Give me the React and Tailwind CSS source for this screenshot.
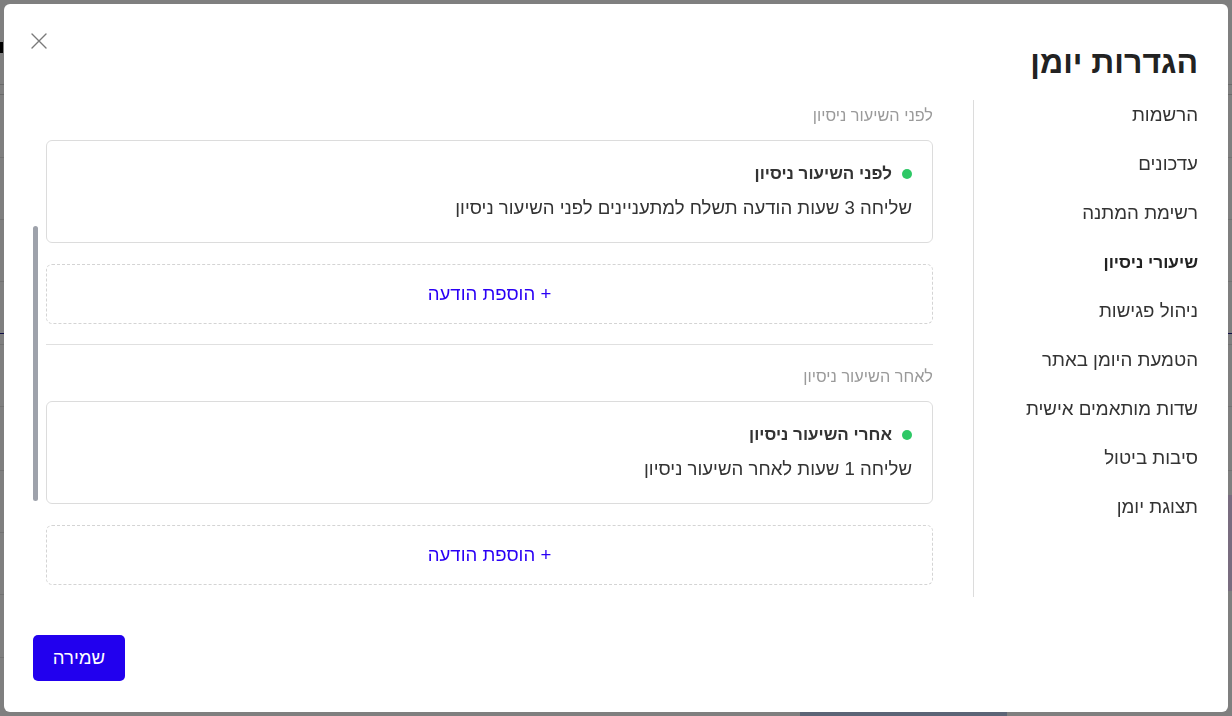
import React from "react";

const navItems = [
  { label: "הרשמות" },
  { label: "עדכונים" },
  { label: "רשימת המתנה" },
  { label: "שיעורי ניסיון", active: true },
  { label: "ניהול פגישות" },
  { label: "הטמעת היומן באתר" },
  { label: "שדות מותאמים אישית" },
  { label: "סיבות ביטול" },
  { label: "תצוגת יומן" },
];

const sections = [
  {
    heading: "לפני השיעור ניסיון",
    title: "לפני השיעור ניסיון",
    body: "שליחה 3 שעות הודעה תשלח למתעניינים לפני השיעור ניסיון",
  },
  {
    heading: "לאחר השיעור ניסיון",
    title: "אחרי השיעור ניסיון",
    body: "שליחה 1 שעות לאחר השיעור ניסיון",
  },
];

// The calendar page that sits beneath the settings dialog
function BackgroundPage() {
  return (
    <div className="h-screen w-full bg-white flex flex-col overflow-hidden">
      <div className="h-[85px] shrink-0 border-b border-[#d4d4d4] flex items-start pt-[42px]">
        <span className="w-[3px] h-[11px] bg-black" />
      </div>
      <div className="h-[10px] shrink-0 border-b border-[#d4d4d4]" />
      <div className="h-[63px] shrink-0 border-b border-[#e4e4e4]" />
      <div className="h-[62px] shrink-0 border-b border-[#e4e4e4]" />
      <div className="h-[62px] shrink-0 border-b border-[#e4e4e4]" />
      <div className="h-[52px] shrink-0 border-b border-[#1e1b8a]" />
      <div className="h-[11px] shrink-0 border-b border-[#e4e4e4]" />
      <div className="h-[62px] shrink-0 border-b border-[#e4e4e4]" />
      <div className="h-[64px] shrink-0 border-b border-[#e4e4e4]" />
      <div className="h-[187px] shrink-0 flex">
        <div className="flex-1 flex flex-col">
          <div className="h-[62px] border-b border-[#e4e4e4]" />
          <div className="h-[62px] border-b border-[#e4e4e4]" />
          <div className="h-[63px] border-b border-[#e4e4e4]" />
        </div>
        <div className="w-[16px] flex flex-col">
          <div className="h-[24px]" />
          <div className="h-[96px] bg-[#f0d8ff]" />
        </div>
      </div>
      <div className="flex-1 flex">
        <div className="w-[800px]" />
        <div className="w-[207px] bg-[#b8c8ec] mt-auto h-[6px]" />
      </div>
    </div>
  );
}

function CloseIcon() {
  return (
    <svg width="16" height="16" viewBox="0 0 16 16" fill="none">
      <path d="M1 1 15 15M15 1 1 15" stroke="#7a7a7a" strokeWidth="1.4" strokeLinecap="round" />
    </svg>
  );
}

function MessageSection({ heading, title, body }) {
  return (
    <div>
      <div className="text-[16.3px] leading-6 text-[#9a9a9a]">{heading}</div>
      <div className="mt-[13px] border border-[#dcdcdc] rounded-[6px] px-5 pt-[19px] pb-[20px]">
        <div className="flex items-center gap-2.5">
          <span className="w-2.5 h-2.5 rounded-full bg-[#2ec866] shrink-0" />
          <span className="text-[17px] leading-7 font-bold text-[#333]">{title}</span>
        </div>
        <div className="mt-[6px] text-[18.6px] leading-7 text-[#333]">{body}</div>
      </div>
      <button className="mt-[21px] w-full h-[60px] border border-dashed border-[#d4d4d4] rounded-[6px] flex items-center justify-center text-[18.6px] text-[#2a00f5]">
        + הוספת הודעה
      </button>
    </div>
  );
}

export default function App() {
  return (
    <div className="font-['Liberation_Sans',Arial,sans-serif]">
      <BackgroundPage />
      <div className="fixed inset-0 bg-black/50" />
      <div dir="rtl" className="fixed inset-1 bg-white rounded-[6px] flex flex-col">
        <header className="h-[96px] shrink-0 flex items-start justify-between pr-[30px] pl-[27px]">
          <h1 className="mt-[38px] text-[32px] leading-[40px] font-bold text-[#222]">הגדרות יומן</h1>
          <button className="mt-[29px]" aria-label="סגירה">
            <CloseIcon />
          </button>
        </header>

        <div className="h-[497px] shrink-0 flex pr-[30px] pl-[29px]">
          <nav className="w-[225px] shrink-0 border-l border-[#dcdcdc] flex flex-col gap-[21px] pt-px">
            {navItems.map((item) => (
              <a
                key={item.label}
                className={
                  item.active
                    ? "text-[17.2px] leading-7 font-bold text-[#222]"
                    : "text-[18.7px] leading-7 text-[#333]"
                }
              >
                {item.label}
              </a>
            ))}
          </nav>

          <div className="w-[887px] shrink-0 ms-10 me-2 overflow-hidden pt-[3px]">
            <MessageSection {...sections[0]} />
            <div className="mt-5 mb-[19px] h-px bg-[#e0e0e0]" />
            <MessageSection {...sections[1]} />
          </div>

          <div className="w-[5px] shrink-0">
            <div className="mt-[126px] h-[275px] rounded-full bg-[#9ea2ab]" />
          </div>
        </div>

        <footer className="flex justify-end pl-[29px] pt-[38px]">
          <button className="w-[92px] h-[46px] rounded-[5px] bg-[#2200ee] text-white text-[18.6px]">
            שמירה
          </button>
        </footer>
      </div>
    </div>
  );
}
